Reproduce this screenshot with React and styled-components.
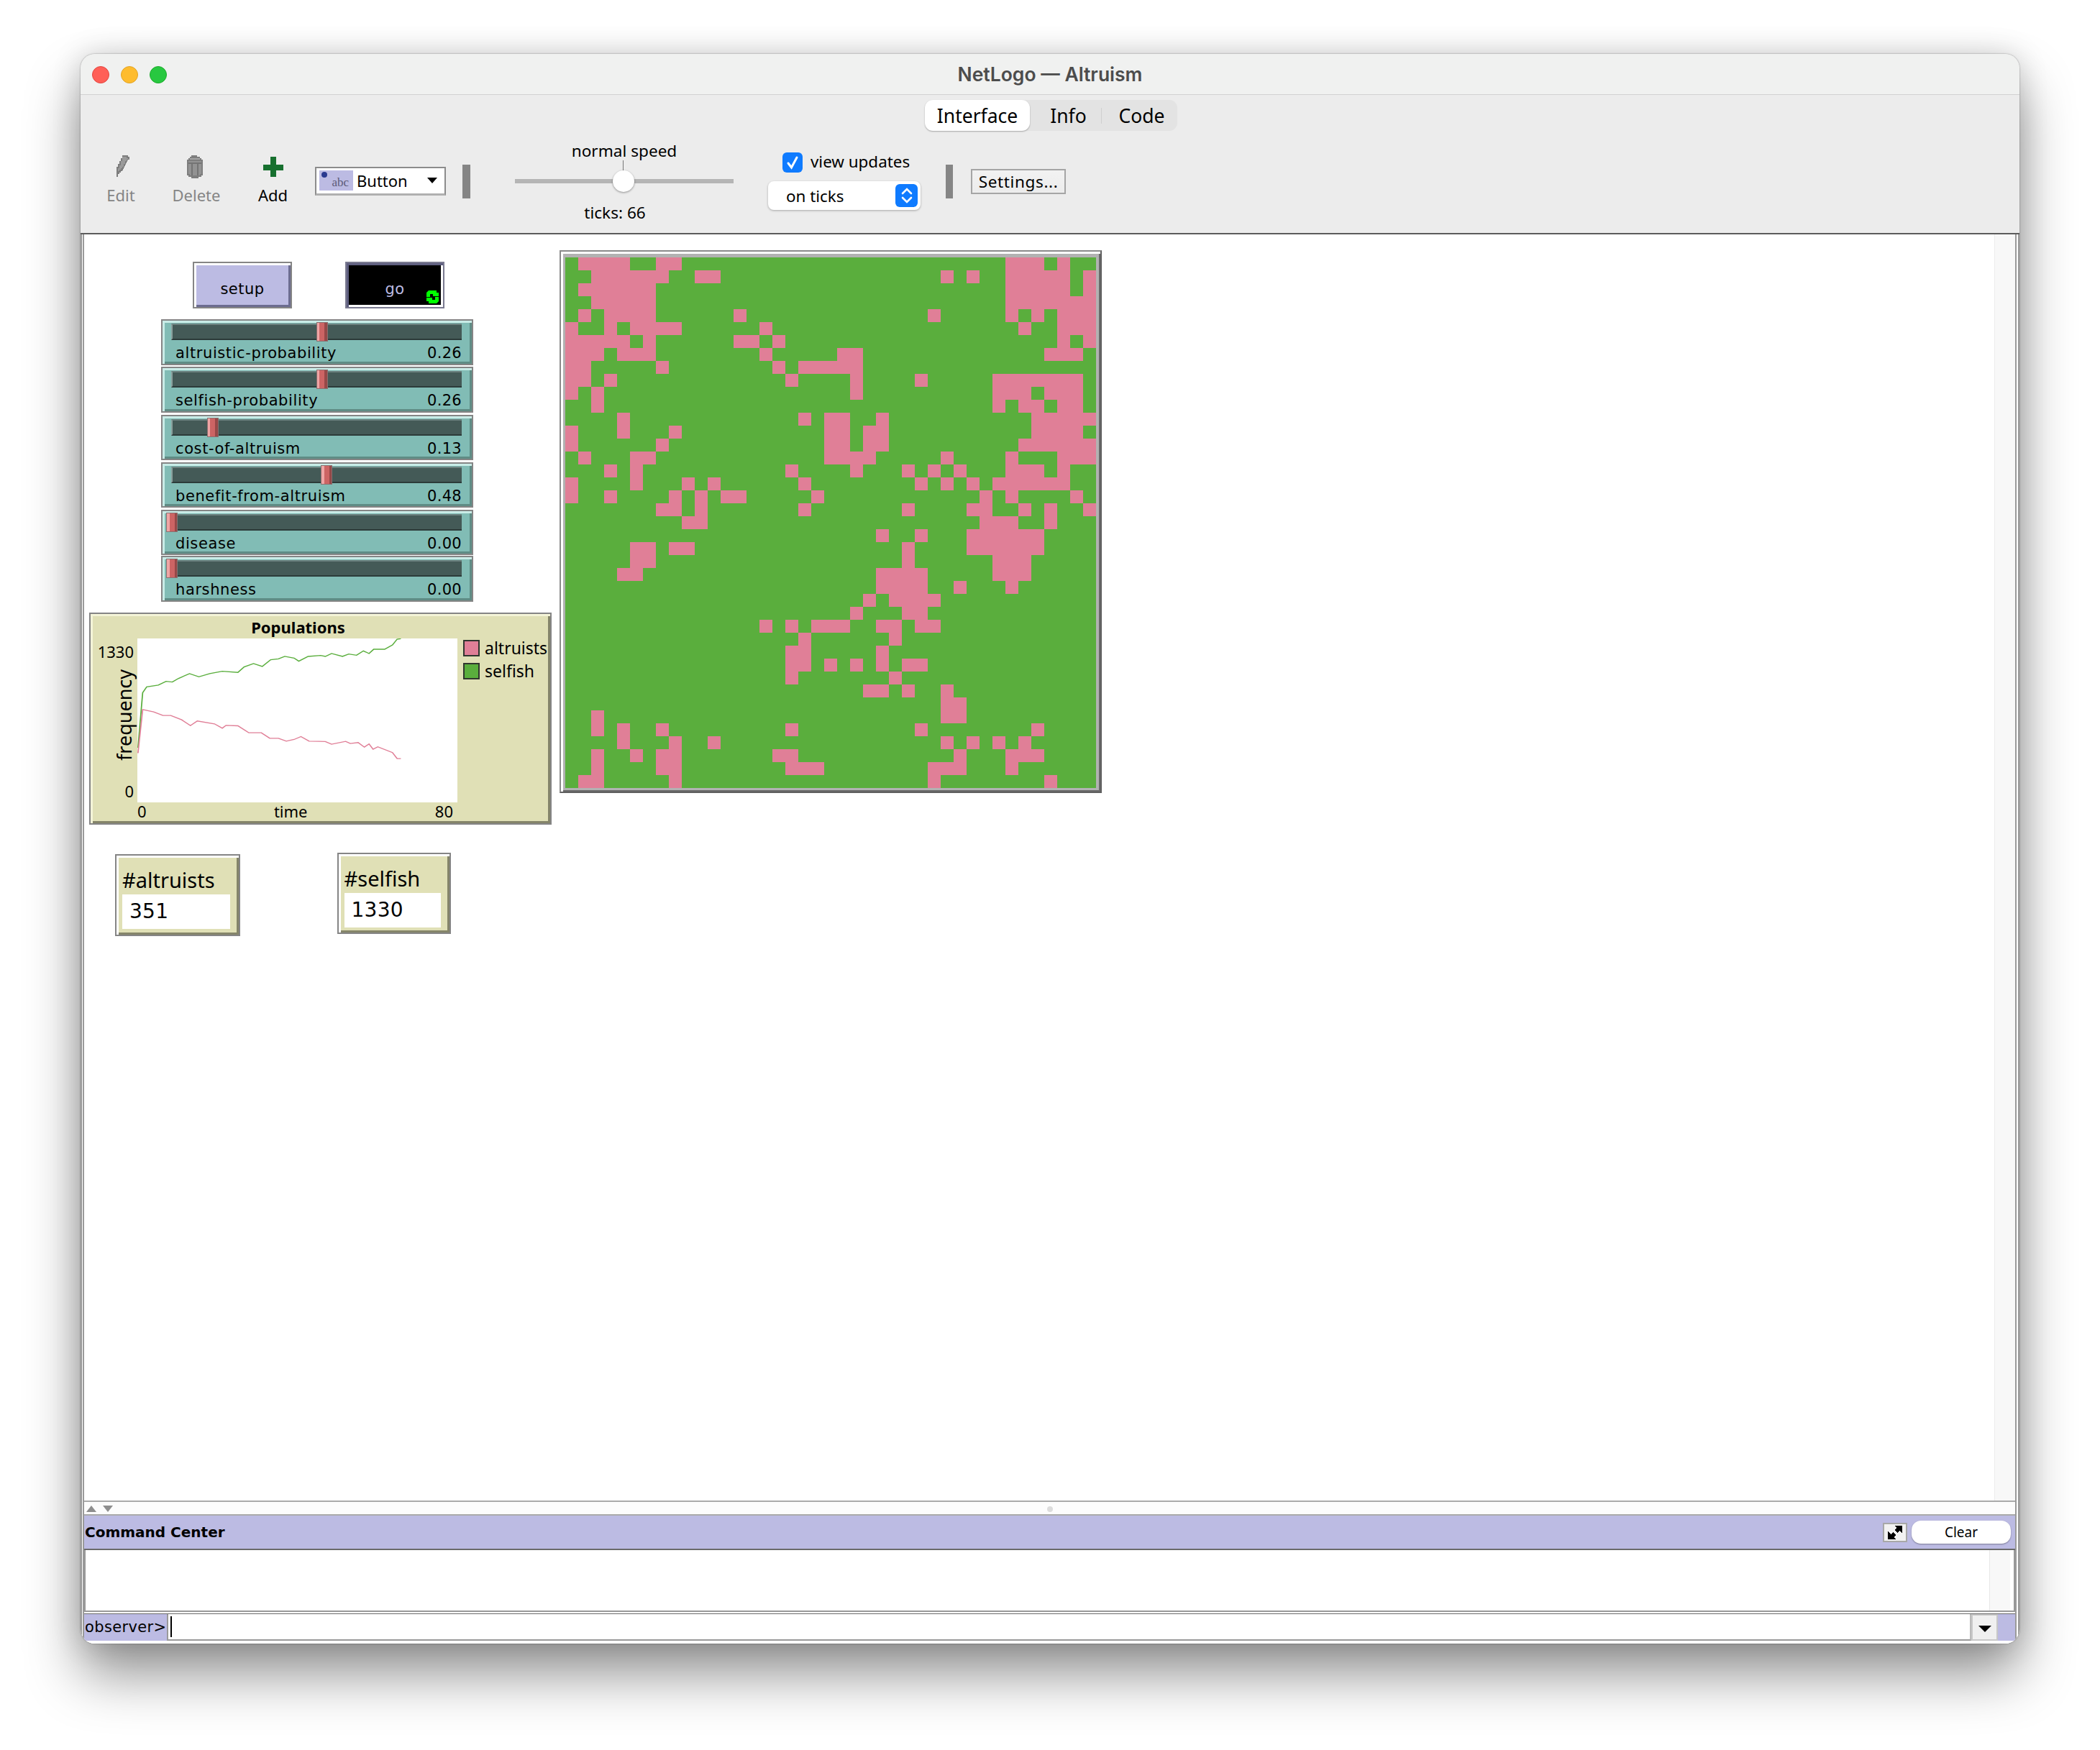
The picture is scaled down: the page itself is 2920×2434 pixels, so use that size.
import React from 'react'
import styled, { createGlobalStyle, css } from 'styled-components'

const GlobalStyle = createGlobalStyle`
  html, body { margin: 0; background: #fff; }
  body { width: 2920px; height: 2434px; overflow: hidden; font-family: "DejaVu Sans", sans-serif; color: #000; }
  * { box-sizing: border-box; }
`

const widgetFont = css`font-family: "DejaVu Sans", sans-serif;`
const uiFont = css`font-family: "Noto Sans", "Open Sans", sans-serif;`

const place = css`
  position: absolute;
  left: ${p => p.$x}px;
  top: ${p => p.$y}px;
  width: ${p => p.$w}px;
  height: ${p => p.$h}px;
`

const bevel = (light, dark, outer = '#858585') => css`
  border: 2px solid ${outer};
  box-shadow: inset 3px 3px 0 ${light}, inset -3px -3px 0 ${dark};
`

const Page = styled.div`
  padding: 75px 0 0 112px;
`

const Win = styled.div`
  width: 2696px;
  height: 2211px;
  display: flex;
  flex-direction: column;
  background: #ececec;
  border-radius: 20px;
  overflow: hidden;
  box-shadow: 0 0 2px rgba(0,0,0,.45), 0 44px 76px rgba(0,0,0,.42), 0 0 40px rgba(0,0,0,.16);
`

const TitleBar = styled.div`
  height: 57px;
  flex: none;
  position: relative;
  display: flex;
  align-items: center;
  justify-content: center;
  background: #f0f1f0;
  border-bottom: 1px solid #d2d2d2;
  font-family: "Inter", sans-serif;
  font-weight: 600;
  font-size: 26.5px;
  color: #4c4c4c;
`

const Lights = styled.div`
  position: absolute;
  left: 16px;
  top: 17px;
  display: flex;
  gap: 16px;
`

const Light = styled.span`
  width: 24px;
  height: 24px;
  border-radius: 50%;
  background: ${p => p.$c};
  border: 1px solid ${p => p.$b};
`

const Toolbar = styled.div`
  flex: none;
  height: 194px;
  display: flex;
  flex-direction: column;
  background: #ececec;
  border-bottom: 2px solid #5c5c5c;
`

const TabsRow = styled.div`
  height: 50px;
  padding: 7px 0 0 1174px;
  flex: none;
`

const Tabs = styled.div`
  width: 351px;
  height: 43px;
  display: flex;
  align-items: center;
  background: #e3e3e3;
  border-radius: 11px;
  ${uiFont}
  font-size: 26.5px;
`

const Tab = styled.div`
  height: 43px;
  width: ${p => p.$w}px;
  padding-left: ${p => p.$pad || 0}px;
  display: flex;
  align-items: center;
  justify-content: center;
  ${p => p.$active && css`
    background: #fff;
    border-radius: 11px;
    box-shadow: 0 1px 2px rgba(0,0,0,.3);
  `}
`

const TabDivider = styled.span`
  width: 1px;
  height: 22px;
  background: #cfcfcf;
`

const ToolRow = styled.div`
  height: 140px;
  display: flex;
  align-items: center;
  padding-left: 36px;
`

const ToolButton = styled.div`
  width: ${p => p.$w}px;
  margin-right: ${p => p.$gap}px;
  display: flex;
  flex-direction: column;
  align-items: center;
  gap: 7px;
  ${uiFont}
  font-size: 22px;
  line-height: 33px;
  color: ${p => p.$off ? '#858585' : '#000'};
`

const ToolIcon = styled.svg`
  width: ${p => p.$w}px;
  height: 32px;
  margin-left: ${p => p.$nudge || 0}px;
  display: block;
  flex: none;
`

const WidgetPicker = styled.div`
  width: 182px;
  height: 40px;
  margin-right: 23px;
  padding: 0 10px 2px 4px;
  display: flex;
  align-items: center;
  background: #fff;
  border: 2px solid #8c8c8c;
  border-bottom: 3px solid #b0b0b0;
  ${uiFont}
  font-size: 22px;
`

const PickerIcon = styled.span`
  width: 47px;
  height: 28px;
  margin-right: 5px;
  padding: 6px 6px 0 0;
  position: relative;
  flex: none;
  background: #bcbbe3;
  text-align: right;
  font-family: "Liberation Serif", serif;
  font-size: 17px;
  line-height: 22px;
  color: #5c5c78;
  &::before {
    content: "";
    position: absolute;
    left: 3px;
    top: 2px;
    width: 8px;
    height: 8px;
    border-radius: 50%;
    background: #2a3a90;
  }
`

const Caret = styled.span`
  width: 0;
  height: 0;
  margin-left: auto;
  border-left: 7.5px solid transparent;
  border-right: 7.5px solid transparent;
  border-top: 8px solid #000;
`

const ToolSep = styled.div`
  width: ${p => p.$w}px;
  height: 47px;
  margin-right: ${p => p.$gap}px;
  flex: none;
  background: #858585;
`

const SpeedBox = styled.div`
  width: 304px;
  margin-right: 48px;
  padding-top: 2px;
  display: flex;
  flex-direction: column;
  align-items: center;
  ${uiFont}
  font-size: 22.6px;
  line-height: 26px;
`

const SpeedTick = styled.span`
  width: 1px;
  height: 14px;
  margin-left: -4px;
  background: #777;
`

const SpeedSlider = styled.div`
  width: 100%;
  height: 30px;
  position: relative;
  display: flex;
  align-items: center;
  &::before {
    content: "";
    width: 100%;
    height: 6px;
    background: #b5b5b5;
  }
`

const SpeedKnob = styled.span`
  position: absolute;
  left: 136px;
  top: 0;
  width: 30px;
  height: 30px;
  border-radius: 50%;
  background: #fff;
  box-shadow: 0 1px 3px rgba(0,0,0,.4);
`

const TicksLabel = styled.div`
  margin-top: 16px;
  padding-right: 26px;
`

const UpdateBox = styled.div`
  width: 212px;
  margin-right: 35px;
  display: flex;
  flex-direction: column;
  gap: 12px;
  ${uiFont}
  font-size: 22.4px;
`

const CheckRow = styled.div`
  height: 28px;
  padding-left: 20px;
  display: flex;
  align-items: center;
  gap: 11px;
  line-height: 26px;
`

const CheckLabel = styled.span`
  margin-bottom: 2px;
`

const CheckBox = styled.span`
  width: 28px;
  height: 28px;
  border-radius: 6px;
  display: flex;
  align-items: center;
  justify-content: center;
  background: #0f7bff;
`

const UpdateSelect = styled.div`
  height: 40px;
  padding: 0 4px 0 25px;
  display: flex;
  align-items: center;
  justify-content: space-between;
  background: #fff;
  border-radius: 8px;
  box-shadow: 0 1px 3px rgba(0,0,0,.3);
`

const SelectChip = styled.span`
  width: 31px;
  height: 32px;
  border-radius: 6px;
  display: flex;
  align-items: center;
  justify-content: center;
  background: #0f7bff;
`

const SettingsButton = styled.div`
  width: 132px;
  height: 35px;
  display: flex;
  align-items: center;
  justify-content: center;
  background: linear-gradient(#f2f2f2, #ececec);
  border: 2px solid #a5a5a5;
  ${uiFont}
  font-size: 22.6px;
  letter-spacing: .6px;
`

const Body = styled.div`
  flex: 1;
  min-height: 0;
  display: flex;
  flex-direction: column;
  background: #fff;
  border-left: 5px double #9a9a9a;
  border-right: 6px double #9a9a9a;
  border-bottom: 4px solid #fff;
`

const MainRow = styled.div`
  flex: 1;
  display: flex;
  min-height: 0;
  border-bottom: 2px solid #aaa;
`

const Canvas = styled.div`
  flex: 1;
  position: relative;
`

const Gutter = styled.div`
  width: 29px;
  flex: none;
  background: #f8f8f8;
  border-left: 1px solid #ececec;
`

const CmdButton = styled.div`
  ${place}
  padding-top: 11px;
  display: flex;
  align-items: center;
  justify-content: center;
  ${widgetFont}
  font-size: 21px;
  letter-spacing: .5px;
  background: ${p => p.$on ? '#000' : '#bcbbe3'};
  color: ${p => p.$on ? '#bcbbe3' : '#000'};
  ${p => p.$on ? bevel('#5f5f80', '#fff', '#7a7a90') : bevel('#fff', '#6c6c90')}
`

const ForeverIcon = styled.svg`
  position: absolute;
  right: 6px;
  bottom: 5px;
  width: 17px;
  height: 18px;
`

const SliderWidget = styled.div`
  ${place}
  padding-top: 4px;
  background: #81bcb5;
  ${bevel('#c9ece7', '#5f8c85')}
  ${widgetFont}
  font-size: 21px;
`

const SliderTrack = styled.div`
  height: 23px;
  margin: 0 14px 0 12px;
  background: #445a57;
  border-top: 2px solid #6d8280;
  border-left: 2px solid #8aa09d;
  border-bottom: 2px solid #2c3b39;
`

const SliderKnob = styled.span`
  position: absolute;
  left: ${p => p.$left}px;
  top: 2px;
  width: 16px;
  height: 27px;
  background: linear-gradient(90deg, #efa5a5 0 25%, #cc6464 25% 75%, #964848 75%);
  border: 1px solid #8a7070;
`

const SliderRow = styled.div`
  margin-top: 4px;
  padding: 0 14px 0 18px;
  display: flex;
  justify-content: space-between;
  line-height: 28px;
`

const SliderName = styled.span`
  letter-spacing: .6px;
`

const SliderValue = styled.span`
  letter-spacing: .3px;
`

const PlotWidget = styled.div`
  ${place}
  display: grid;
  grid-template-columns: 65px 445px 1fr;
  grid-template-rows: 34px 228px 1fr;
  background: #e0e0b6;
  ${bevel('#f4f4d8', '#85856a')}
  ${uiFont}
  font-size: 22px;
`

const PlotTitle = styled.div`
  grid-column: 1 / 4;
  padding: 4px 62px 0 0;
  text-align: center;
  font-weight: 700;
  line-height: 28px;
`

const YAxis = styled.div`
  position: relative;
  display: flex;
  flex-direction: column;
  justify-content: space-between;
  align-items: flex-end;
  padding: 4px 5px 2px 0;
  line-height: 28px;
`

const YTitle = styled.span`
  position: absolute;
  left: 31px;
  top: 44px;
  height: 126px;
  writing-mode: vertical-rl;
  transform: rotate(180deg);
  text-align: center;
  font-size: 27px;
  line-height: 32px;
`

const PlotArea = styled.svg`
  width: 445px;
  height: 228px;
  display: block;
  background: #fff;
`

const LegendList = styled.div`
  padding: 2px 0 0 8px;
  display: flex;
  flex-direction: column;
  gap: 9px;
  font-size: 23px;
`

const LegendRow = styled.div`
  display: flex;
  align-items: center;
  gap: 7px;
  line-height: 23px;
`

const LegendSwatch = styled.span`
  width: 23px;
  height: 23px;
  background: ${p => p.$c};
  border: 2px solid #30362e;
`

const XAxis = styled.div`
  grid-column: 2;
  margin-top: -2px;
  padding: 0 6px 0 0;
  display: flex;
  justify-content: space-between;
  line-height: 28px;
`

const MonitorWidget = styled.div`
  ${place}
  padding: 18px 12px 0 8px;
  background: #e0e0b6;
  ${bevel('#fff', '#85856a')}
  ${uiFont}
  font-size: 29px;
`

const MonitorName = styled.div`
  line-height: 32px;
`

const MonitorValue = styled.div`
  height: 48px;
  margin-top: 4px;
  padding-left: 10px;
  background: #fff;
  ${widgetFont}
  font-size: 28px;
  line-height: 48px;
  letter-spacing: .3px;
`

const ViewWidget = styled.div`
  ${place}
  padding: 8px 6px 5px;
  background: #b2b2b2;
  border: 2px solid;
  border-color: #8a8a8a #5f5f5f #5f5f5f #8a8a8a;
  box-shadow: inset 3px 3px 0 #fff, inset -2px -2px 0 #6a6a6a;
`

const PatchGrid = styled.svg`
  width: 738px;
  height: 738px;
  display: block;
`

const Splitter = styled.div`
  height: 19px;
  flex: none;
  position: relative;
  display: flex;
  gap: 9px;
  padding: 5px 0 0 3px;
  background: #fcfcfc;
  border-bottom: 2px solid #aaa;
  &::after {
    content: "";
    position: absolute;
    left: 1339px;
    top: 6px;
    width: 8px;
    height: 8px;
    border-radius: 50%;
    background: #dcdcdc;
  }
`

const SplitArrow = styled.span`
  width: 0;
  height: 0;
  border-left: 7px solid transparent;
  border-right: 7px solid transparent;
  ${p => p.$up ? 'border-bottom: 9px solid #8e8e8e;' : 'border-top: 9px solid #8e8e8e;'}
`

const CmdHeader = styled.div`
  height: 48px;
  flex: none;
  padding: 0 6px 0 1px;
  display: flex;
  align-items: center;
  background: #bcbbe3;
  border-bottom: 2px solid #6a6a6a;
  ${widgetFont}
  font-size: 20px;
  font-weight: 700;
`

const ExpandButton = styled.span`
  width: 34px;
  height: 27px;
  margin-left: auto;
  margin-right: 6px;
  display: flex;
  align-items: center;
  justify-content: center;
  background: #f2f2f2;
  border: 2px solid #a8a8a8;
`

const ClearButton = styled.span`
  width: 138px;
  height: 32px;
  display: flex;
  align-items: center;
  justify-content: center;
  background: #fff;
  border-radius: 13px;
  box-shadow: 0 1px 2px rgba(0,0,0,.35);
  ${uiFont}
  font-size: 19px;
  font-weight: 400;
`

const CmdOutput = styled.div`
  height: 86px;
  flex: none;
  display: flex;
  justify-content: flex-end;
  padding-right: 5px;
  background: #fff;
  border: 2px solid #999;
  border-top: 0;
`

const OutputGutter = styled.div`
  width: 29px;
  background: #f8f8f8;
  border-left: 1px solid #e8e8e8;
`

const InputRow = styled.div`
  height: 38px;
  flex: none;
  margin-top: 2px;
  display: flex;
  border-top: 1px solid #6a6a6a;
  background: #bcbbe3;
`

const Prompt = styled.div`
  width: 115px;
  flex: none;
  padding-left: 1px;
  ${widgetFont}
  font-size: 21px;
  line-height: 36px;
  letter-spacing: .35px;
  white-space: nowrap;
`

const CommandField = styled.div`
  flex: 1;
  padding: 3px 0 0 3px;
  background: #fff;
  border: 2px solid #999;
  border-top: 0;
  border-right-color: #bbb;
  &::before {
    content: "";
    display: block;
    width: 2px;
    height: 29px;
    background: #000;
  }
`

const HistoryButton = styled.div`
  width: 37px;
  flex: none;
  margin-right: 24px;
  padding-top: 14px;
  display: flex;
  justify-content: center;
  background: #f0f0f0;
  border: 2px solid #c8c8c8;
  &::before {
    content: "";
    width: 0;
    height: 0;
    border-left: 9px solid transparent;
    border-right: 9px solid transparent;
    border-top: 9px solid #000;
  }
`

// pink patches per row of the 41x41 world, as "from-to" columns
const PATCH_ROWS = [
  '1-4 7-8 34-36 38',
  '2-7 10-11 29 31 34-38 40',
  '1-6 34-38 40',
  '2-6 34-40',
  '1 3-6 13 28 34 36 38-40',
  '0 3 5-8 15 35 38-40',
  '0-4 6 13-14 16 38 40',
  '0-2 4-6 15 21-22 37-39',
  '0-1 7 16 18-22',
  '0-1 3 17 22 27 33-39',
  '0 2 22 33-35 37-39',
  '2 33 35-36 38-39',
  '4 18 20-21 24 36-40',
  '0 4 8 20-21 23-24 36-39',
  '0 7 20-21 23-24 35-40',
  '1 5-6 20-23 29 34 38-40',
  '3 5 17 22 26 28 30 34-36 38',
  '0 5 9 11 18 27 29 31 33-38',
  '0 3 8 10 12-13 19 32 34 39',
  '7-8 10 18 26 31-32 35 37 40',
  '9-10 32-34 37',
  '24 27 31-36',
  '5-6 8-9 26 31-36',
  '5-6 26 33-35',
  '4-5 24-27 33-35',
  '24-27 30 34',
  '23 25-28',
  '22 26-27',
  '15 17 19-21 24-25 27-28',
  '18 25',
  '17-18 24',
  '17-18 20 22 24 26-27',
  '17 25',
  '23-24 26 29',
  '29-30',
  '2 29-30',
  '2 4 7 17 27 36',
  '4 8 11 29 31 33 35',
  '2 5 7-8 16-17 30 34-36',
  '2 7-8 17-19 28-30 34',
  '1-2 8 28 37',
]

const patchRects = PATCH_ROWS.flatMap((row, y) =>
  row.split(' ').map(part => {
    const [from, to = from] = part.split('-').map(Number)
    return { key: `${y}-${from}`, x: from * 18, y: y * 18, width: (to - from + 1) * 18 }
  })
)

const SLIDERS = [
  { name: 'altruistic-probability', value: '0.26', y: 118, h: 64, knob: 214 },
  { name: 'selfish-probability', value: '0.26', y: 184, h: 64, knob: 214 },
  { name: 'cost-of-altruism', value: '0.13', y: 251, h: 63, knob: 62 },
  { name: 'benefit-from-altruism', value: '0.48', y: 317, h: 63, knob: 220 },
  { name: 'disease', value: '0.00', y: 383, h: 63, knob: 5 },
  { name: 'harshness', value: '0.00', y: 447, h: 64, knob: 5 },
]

// plot lines traced from the run, in viewBox units
const SELFISH_LINE = '190,600 205,370 218,345 255,338 280,322 300,325 320,310 355,290 385,303 420,290 460,280 510,285 530,262 560,248 588,260 615,232 640,228 660,218 690,225 705,238 735,218 775,214 790,218 810,206 845,218 865,208 890,213 912,195 930,206 945,188 980,188 1005,170 1020,146 1032,144'
const ALTRUIST_LINE = '190,622 205,440 240,450 270,465 295,465 330,483 358,507 380,488 435,500 460,518 472,506 510,508 545,537 585,537 612,560 640,560 665,572 690,565 712,553 738,572 770,573 790,574 810,585 855,573 870,582 895,578 915,597 930,584 943,606 958,596 1005,620 1020,645 1032,645'

const FOREVER_HALF = 'M0 9 V3 L3 0 H14 V3 H17 V8 H9 V5 H5 V9 Z'

export default function App() {
  return (
    <Page>
      <GlobalStyle />
      <Win>
        <TitleBar>
          <Lights>
            <Light $c="#ff5f57" $b="#e2463f" />
            <Light $c="#febc2e" $b="#e1a325" />
            <Light $c="#28c840" $b="#1aab29" />
          </Lights>
          NetLogo — Altruism
        </TitleBar>

        <Toolbar>
          <TabsRow>
            <Tabs>
              <Tab $active $w={146}>Interface</Tab>
              <Tab $w={99} $pad={8}>Info</Tab>
              <TabDivider />
              <Tab $w={105} $pad={6}>Code</Tab>
            </Tabs>
          </TabsRow>
          <ToolRow>
            <ToolButton $off $w={40} $gap={53}>
              <ToolIcon $w={18} $nudge={6} viewBox="0 0 18 32" shapeRendering="crispEdges">
                <path d="M8 0 H16 V2 H18 V6 H16 L14 10 L12 14 L10 18 L8 22 H6 V24 H4 V26 H2 V30 H0 V16 H2 V12 H4 V8 H6 V4 H8 Z" fill="#7d7d7d" />
                <path d="M8 2 H14 V4 H16 V6 H14 V8 H12 V12 H10 V16 H8 V18 H6 V20 H4 V22 H2 V18 H4 V14 H6 V8 H8 Z" fill="#9a9a9a" />
              </ToolIcon>
              Edit
            </ToolButton>
            <ToolButton $off $w={64} $gap={53}>
              <ToolIcon $w={22} $nudge={-4} viewBox="0 0 22 32" shapeRendering="crispEdges">
                <path d="M6 0 H14 V2 H18 V4 H20 V6 H22 V28 H20 V30 H16 V32 H6 V30 H2 V28 H0 V6 H2 V4 H4 V2 H6 Z" fill="#7e7e7e" />
                <path d="M2 8 H20 V26 H18 V28 H4 V26 H2 Z" fill="#939393" />
                <path d="M4 4 H18 V6 H4 Z" fill="#a2a2a2" />
                <path d="M2 10 H20 V12 H2 Z M6 12 H8 V28 H6 Z M14 12 H16 V28 H14 Z" fill="#747474" />
              </ToolIcon>
              Delete
            </ToolButton>
            <ToolButton $w={43} $gap={37}>
              <ToolIcon $w={30} viewBox="0 0 30 32">
                <path d="M11 2 H19 V13 H29 V21 H19 V30 H11 V21 H1 V13 H11 Z" fill="#17702f" />
              </ToolIcon>
              Add
            </ToolButton>
            <WidgetPicker>
              <PickerIcon>abc</PickerIcon>
              Button
              <Caret />
            </WidgetPicker>
            <ToolSep $w={11} $gap={62} />
            <SpeedBox>
              normal speed
              <SpeedTick />
              <SpeedSlider><SpeedKnob /></SpeedSlider>
              <TicksLabel>ticks: 66</TicksLabel>
            </SpeedBox>
            <UpdateBox>
              <CheckRow>
                <CheckBox>
                  <svg width="18" height="20" viewBox="0 0 18 20">
                    <path d="M3 11 L7.5 17 L15 3" stroke="#fff" strokeWidth="3" fill="none" strokeLinecap="round" />
                  </svg>
                </CheckBox>
                <CheckLabel>view updates</CheckLabel>
              </CheckRow>
              <UpdateSelect>
                on ticks
                <SelectChip>
                  <svg width="18" height="26" viewBox="0 0 18 26">
                    <path d="M3 10 L9 4 L15 10 M3 16 L9 22 L15 16" stroke="#fff" strokeWidth="2.6" fill="none" strokeLinecap="round" />
                  </svg>
                </SelectChip>
              </UpdateSelect>
            </UpdateBox>
            <ToolSep $w={10} $gap={25} />
            <SettingsButton>Settings...</SettingsButton>
          </ToolRow>
        </Toolbar>

        <Body>
          <MainRow>
            <Canvas>
              <CmdButton $x={151} $y={38} $w={138} $h={65}>setup</CmdButton>
              <CmdButton $on $x={363} $y={38} $w={138} $h={65}>
                go
                <ForeverIcon viewBox="0 0 17 18">
                  <path d={FOREVER_HALF} fill="#00ff00" />
                  <path d={FOREVER_HALF} fill="#00ff00" transform="rotate(180 8.5 9)" />
                </ForeverIcon>
              </CmdButton>

              {SLIDERS.map(s => (
                <SliderWidget key={s.name} $x={107} $y={s.y} $w={434} $h={s.h}>
                  <SliderTrack />
                  <SliderKnob $left={s.knob} />
                  <SliderRow>
                    <SliderName>{s.name}</SliderName>
                    <SliderValue>{s.value}</SliderValue>
                  </SliderRow>
                </SliderWidget>
              ))}

              <PlotWidget $x={7} $y={526} $w={643} $h={295}>
                <PlotTitle>Populations</PlotTitle>
                <YAxis>
                  <span>1330</span>
                  <YTitle>frequency</YTitle>
                  <span>0</span>
                </YAxis>
                <PlotArea viewBox="188 143 1025 685" preserveAspectRatio="none">
                  <polyline points={SELFISH_LINE} fill="none" stroke="#5aae3d" strokeWidth="4" />
                  <polyline points={ALTRUIST_LINE} fill="none" stroke="#e07f97" strokeWidth="4" />
                </PlotArea>
                <LegendList>
                  <LegendRow><LegendSwatch $c="#e07f97" />altruists</LegendRow>
                  <LegendRow><LegendSwatch $c="#5aae3d" />selfish</LegendRow>
                </LegendList>
                <XAxis>
                  <span>0</span>
                  <span>time</span>
                  <span>80</span>
                </XAxis>
              </PlotWidget>

              <MonitorWidget $x={43} $y={862} $w={174} $h={114}>
                <MonitorName>#altruists</MonitorName>
                <MonitorValue>351</MonitorValue>
              </MonitorWidget>
              <MonitorWidget $x={351.5} $y={860} $w={158} $h={113}>
                <MonitorName>#selfish</MonitorName>
                <MonitorValue>1330</MonitorValue>
              </MonitorWidget>

              <ViewWidget $x={661} $y={22} $w={754} $h={755}>
                <PatchGrid viewBox="0 0 738 738" shapeRendering="crispEdges">
                  <rect width="738" height="738" fill="#5aae3d" />
                  {patchRects.map(({ key, ...r }) => (
                    <rect key={key} {...r} height="18" fill="#e07f97" />
                  ))}
                </PatchGrid>
              </ViewWidget>
            </Canvas>
            <Gutter />
          </MainRow>

          <Splitter>
            <SplitArrow $up />
            <SplitArrow />
          </Splitter>

          <CmdHeader>
            Command Center
            <ExpandButton>
              <svg width="20" height="19" viewBox="0 0 20 19" shapeRendering="crispEdges">
                <path d="M0 8 L0 19 L11 19 L8 16 L11 13 L7 9 L4 12 Z M20 11 L20 0 L9 0 L12 3 L9 6 L13 10 L16 7 Z" fill="#000" />
              </svg>
            </ExpandButton>
            <ClearButton>Clear</ClearButton>
          </CmdHeader>

          <CmdOutput><OutputGutter /></CmdOutput>

          <InputRow>
            <Prompt>observer&gt;</Prompt>
            <CommandField />
            <HistoryButton />
          </InputRow>
        </Body>
      </Win>
    </Page>
  )
}
